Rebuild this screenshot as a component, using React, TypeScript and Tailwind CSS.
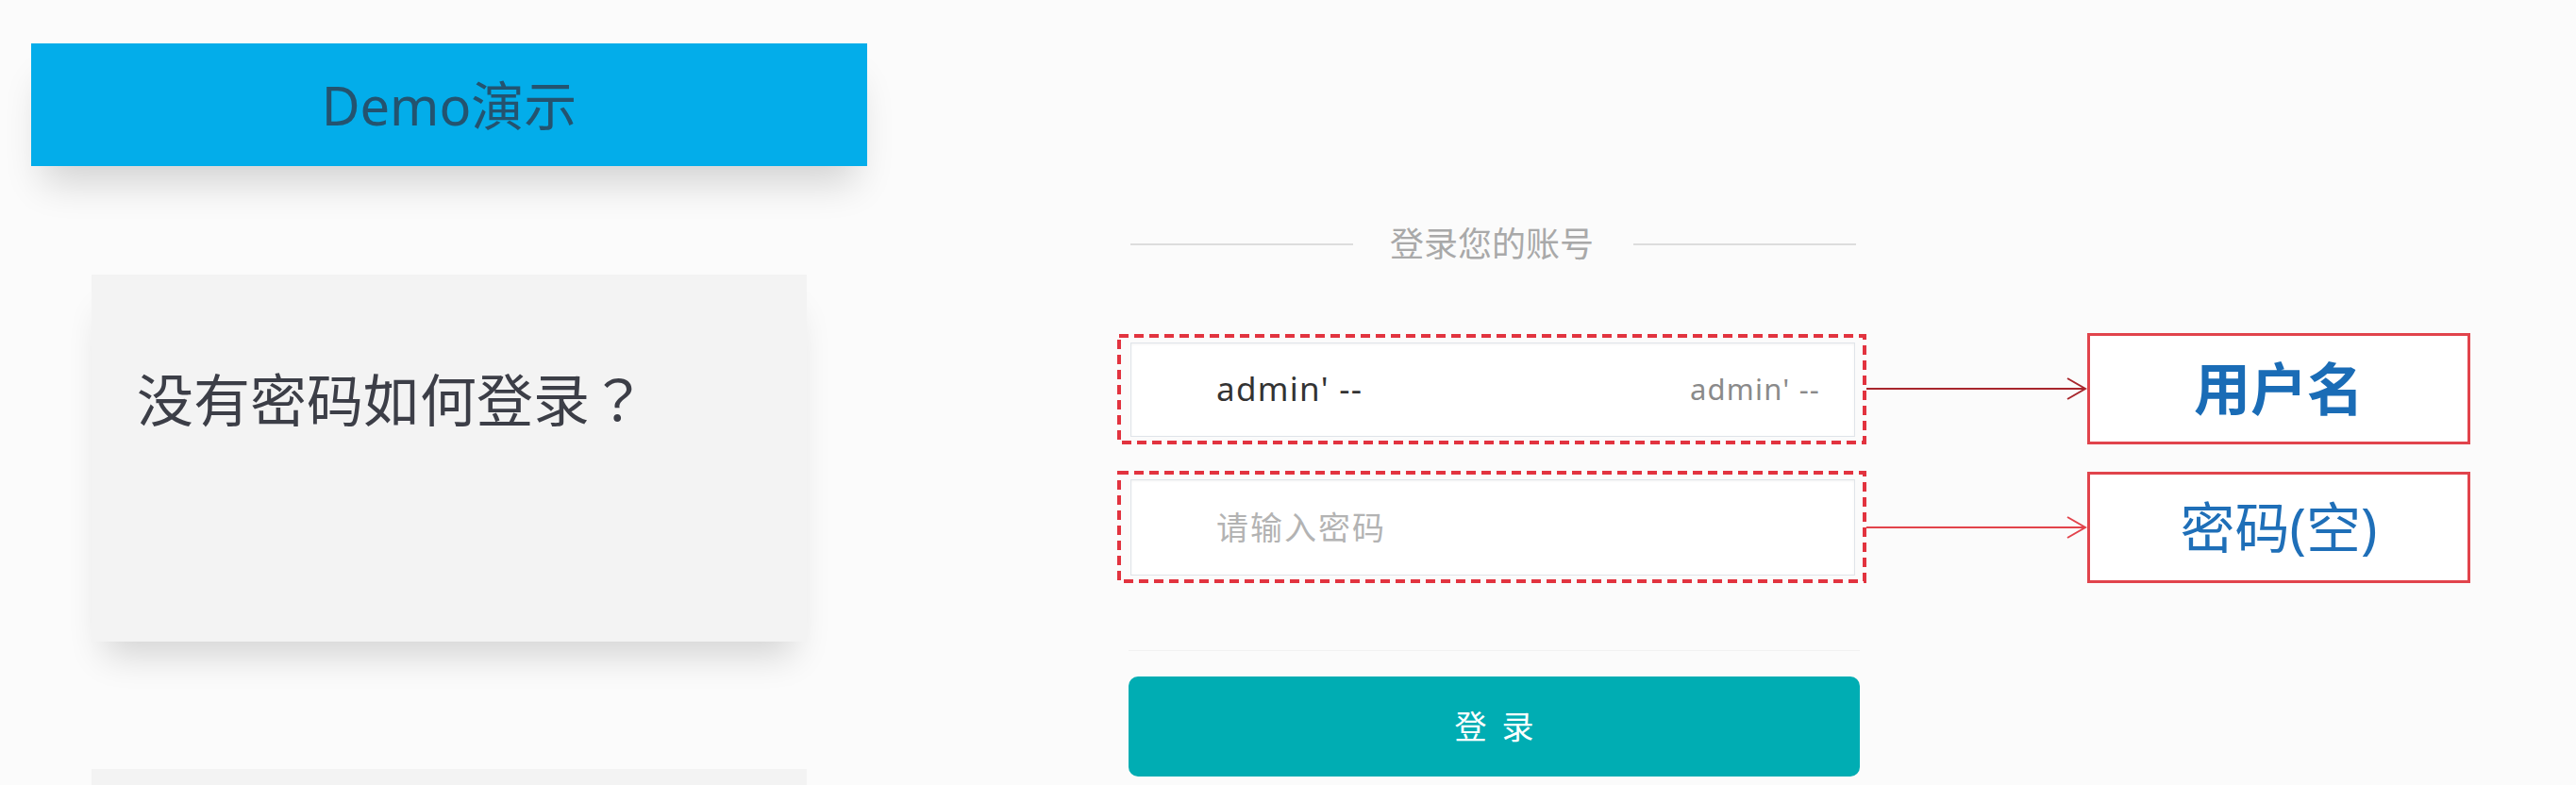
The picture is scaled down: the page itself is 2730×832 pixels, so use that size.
import React from "react";

const FONT = { fontFamily: '"Noto Sans", "Noto Sans CJK SC", sans-serif' };
const TC = { fontFamily: '"Noto Sans CJK TC", "Noto Sans CJK SC", sans-serif' };

function DashedBox({ h, children }: { h: number; children: React.ReactNode }) {
  return (
    <div className="relative w-[794px] shrink-0 pl-[14px] pr-[12px] pt-[9px] pb-[8px]" style={{ height: h }}>
      <div className="h-full w-full bg-white border border-[#e0e4e9] shadow-[inset_0_1px_3px_rgba(0,0,0,0.05)] flex items-center justify-between pl-[90px] pr-[36px]">
        {children}
      </div>
      <svg className="absolute inset-0 pointer-events-none" width="794" height={h}>
        <rect x="2" y="2" width="790" height={h - 4} fill="none" stroke="#e2333f" strokeWidth="4" strokeDasharray="10 6" />
      </svg>
    </div>
  );
}

function Arrow({ color }: { color: string }) {
  return (
    <svg width="234" height="30" className="shrink-0">
      <line x1="0" y1="15" x2="232" y2="15" stroke={color} strokeWidth="2" />
      <polyline points="213,4 232,15 213,26" fill="none" stroke={color} strokeWidth="2" />
    </svg>
  );
}

export default function App() {
  return (
    <div className="w-[2730px] h-[832px] bg-[#fbfbfb] flex overflow-hidden" style={FONT}>
      {/* Left column */}
      <div className="w-[1184px] shrink-0 flex flex-col pl-[33px] pt-[46px]">
        <div className="w-[886px] h-[130px] shrink-0 bg-[#03adea] flex items-center justify-center text-[56px] text-[#24536f] shadow-[0_30px_40px_-12px_rgba(0,0,0,0.16)]">
          Demo演示
        </div>
        <div
          className="ml-[64px] mt-[115px] w-[758px] h-[389px] shrink-0 bg-[#f3f3f3] pl-[48px] pt-[94px] text-[60px] leading-[1.2] text-[#3c3e47] shadow-[0_28px_36px_-14px_rgba(0,0,0,0.16)]"
          style={TC}
        >
          没有密码如何登录？
        </div>
        <div className="ml-[64px] mt-[135px] w-[758px] h-[200px] shrink-0 bg-[#f3f3f3]" />
      </div>

      {/* Right column */}
      <div className="flex flex-col pt-[241px]">
        <div className="w-[794px] h-[36px] flex items-center pl-[14px]">
          <div className="w-[236px] h-[2px] bg-[#dddddd]" />
          <div className="ml-[39px] text-[36px] leading-none text-[#a9a9a9]">登录您的账号</div>
          <div className="ml-[42px] w-[236px] h-[2px] bg-[#dddddd]" />
        </div>

        <div className="mt-[76px] flex items-center">
          <DashedBox h={117}>
            <span className="text-[35px] tracking-[1.3px] text-[#333333]">admin' --</span>
            <span className="text-[31px] tracking-[1.2px] text-[#8a8a8a]">admin' --</span>
          </DashedBox>
          <Arrow color="#a8262c" />
          <div className="w-[406px] h-[118px] shrink-0 border-[3px] border-[#e1444c] bg-white flex items-center justify-center text-[60px] font-bold text-[#1a6cb6]">
            用户名
          </div>
        </div>

        <div className="mt-[28px] flex items-center">
          <DashedBox h={119}>
            <span className="text-[34px] tracking-[2px] text-[#b3b3b3]">请输入密码</span>
          </DashedBox>
          <Arrow color="#e2434b" />
          <div className="w-[406px] h-[118px] shrink-0 border-[3px] border-[#e1444c] bg-white flex items-center justify-center text-[58px] text-[#1f6fb8]">
            密码(空)
          </div>
        </div>

        <div className="mt-[71px] ml-[12px] w-[775px] h-px bg-[#f1f1f1]" />
        <div className="mt-[27px] ml-[12px] w-[775px] h-[106px] rounded-[10px] bg-[#00adb3] flex items-center justify-center text-[34px] text-white tracking-[16px] pl-[16px]">
          登录
        </div>
      </div>
    </div>
  );
}
